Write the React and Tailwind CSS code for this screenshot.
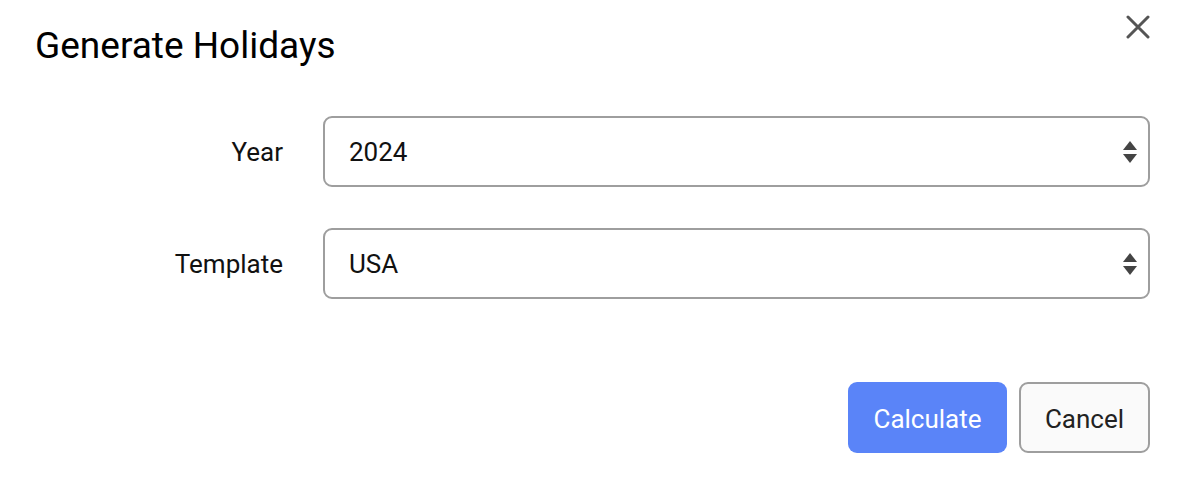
import React, { useState } from 'react'

function Chevrons() {
  return (
    <svg width="16" height="26" viewBox="0 0 16 26" className="pointer-events-none absolute right-[12px] top-1/2 -translate-y-1/2">
      <path d="M8 2 L15 11 L1 11 Z" fill="#444" />
      <path d="M1 15 L15 15 L8 24 Z" fill="#444" />
    </svg>
  )
}

function SelectRow({ label, value, options, onChange }) {
  return (
    <div className="flex items-center">
      <label className="w-[283px] shrink-0 pt-[2px] text-right text-[26px] text-[#111]">{label}</label>
      <div className="relative ml-[40px] flex-1">
        <select
          value={value}
          onChange={(e) => onChange(e.target.value)}
          className="h-[71px] w-full appearance-none rounded-[9px] border-2 border-[#9e9e9e] bg-white pl-[24px] pt-[2px] text-[26px] text-[#111] outline-none"
        >
          {options.map((o) => (
            <option key={o} value={o}>{o}</option>
          ))}
        </select>
        <Chevrons />
      </div>
    </div>
  )
}

export default function App() {
  const [year, setYear] = useState('2024')
  const [template, setTemplate] = useState('USA')

  return (
    <div className="h-[490px] w-[1184px] bg-white font-['Roboto',sans-serif]">
      <div className="flex items-start justify-between pl-[35px] pr-[34px] pt-[24px]">
        <h2 className="text-[37px] leading-[44px] text-black">Generate Holidays</h2>
        <button className="-mt-[9px]">
          <svg width="24" height="24" viewBox="0 0 24 24">
            <path d="M2 2 L22 22 M22 2 L2 22" stroke="#555" strokeWidth="3" strokeLinecap="round" />
          </svg>
        </button>
      </div>

      <div className="flex flex-col gap-[41px] pr-[34px] pt-[48px]">
        <SelectRow label="Year" value={year} options={['2023', '2024', '2025']} onChange={setYear} />
        <SelectRow label="Template" value={template} options={['USA', 'UK', 'Canada']} onChange={setTemplate} />
      </div>

      <div className="flex justify-end gap-[12px] pr-[34px] pt-[83px]">
        <button className="h-[71px] w-[159px] rounded-[9px] bg-[#5a84f8] pt-[3px] text-[26px] text-white">Calculate</button>
        <button className="h-[71px] w-[131px] rounded-[9px] border-2 border-[#9e9e9e] bg-[#fafafa] pt-[3px] text-[26px] text-[#222]">Cancel</button>
      </div>
    </div>
  )
}
